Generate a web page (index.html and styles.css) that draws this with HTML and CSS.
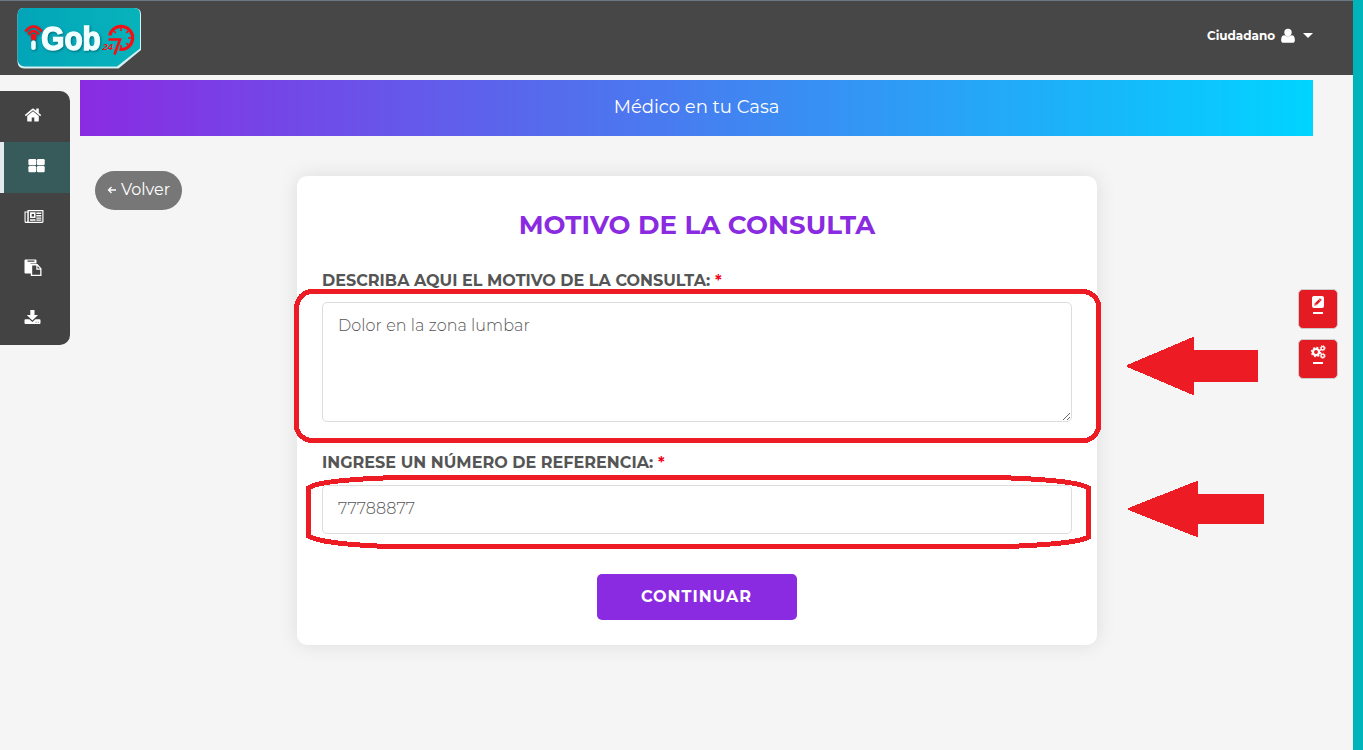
FILE: index.html
```html
<!DOCTYPE html>
<html lang="es">
<head>
<meta charset="utf-8">
<title>iGob 24/7 - Médico en tu Casa</title>
<link rel="stylesheet" href="styles.css">
</head>
<body>
<div class="page">
  <header class="topbar">
    <svg class="logo" width="126" height="64" viewBox="0 0 126 64">
      <defs>
        <linearGradient id="teal" x1="0" x2="1" y1="0" y2="0"><stop offset="0" stop-color="#02a5b8"/><stop offset="1" stop-color="#07b3bb"/></linearGradient>
      </defs>
      <path d="M7 2H118Q125 2 125 8V44L102.500 62.500H8Q2 62 1.500 56V9Q2 2 7 2Z" fill="#d8f1f2"/>
      <path d="M7 2H118Q124 2 124 8V42.500L101 60.500H8Q2 60 1.500 53V9Q2 2 7 2Z" fill="url(#teal)"/>
      <g class="mark">
        <text class="gob" x="25.300" y="43.700" textLength="59.500" lengthAdjust="spacingAndGlyphs">Gob</text>
        <path d="M15.200 36Q17.500 32.500 19.800 36V42Q19.800 44 17.500 44T15.200 42Z" fill="#f0ffff"/>
        <circle cx="17.500" cy="30.500" r="2.800" fill="#f40f14"/>
        <path d="M15.500 31H19.500L20 35Q17.500 32 15 35Z" fill="#f40f14"/>
        <path d="M9.300 25.500Q17.500 15.500 25.700 25.500M12.300 28.500Q17.500 21.500 22.700 28.500" fill="none" stroke="#f40f14" stroke-width="2.600"/>
      </g>
      <g>
        <path d="M93.700 29.500A11.600 11.600 0 1 1 103.500 43.400" fill="none" stroke="#f40f14" stroke-width="3.200"/>
        <path d="M105 22V25M112 25L110.300 27M115 32H112M112 39L110.300 37M98 25L99.800 27M105 42V39" stroke="#f40f14" stroke-width="1.600"/>
        <text class="num" x="86.500" y="43.500">24</text>
        <path d="M92.500 33.500H104L98.500 48.500" fill="none" stroke="#f40f14" stroke-width="2.600"/>
      </g>
    </svg>
    <div class="account">
      <span class="account-name">Ciudadano</span>
      <svg class="user" width="16" height="16" viewBox="0 0 1792 1792"><path d="M1664 1380q0 120-73 202t-181 82H382q-108 0-181-82t-73-202q0-85 8-160t38-152 68-131 94-89 134-34q180 128 426 128t426-128q76 0 134 34t94 89 68 131 38 152 8 160zM1310 500a414 414 0 1 1-828 0 414 414 0 1 1 828 0z"/></svg>
      <span class="caret"></span>
    </div>
  </header>

  <div class="body">
    <nav class="sidebar">
      <a class="item home"><svg width="18" height="18" viewBox="0 0 1792 1792"><path d="M1472 992v480q0 26-19 45t-45 19h-384v-384h-256v384h-384q-26 0-45-19t-19-45v-480q0-1 .5-3t.5-3l575-474 575 474q1 2 1 6zm223-69l-62 74q-8 9-21 11h-3q-13 0-21-7l-692-577-692 577q-12 8-24 7-13-2-21-11l-62-74q-8-10-7-23.500t11-21.500l719-599q32-26 76-26t76 26l244 204v-195q0-14 9-23t23-9h192q14 0 23 9t9 23v408l219 182q10 8 11 21.500t-7 23.500z"/></svg></a>
      <a class="item active"><svg width="18" height="18" viewBox="0 0 18 18"><rect x=".4" y="3" width="7.800" height="6.200" rx="1.300"/><rect x="8.900" y="3" width="7.800" height="6.200" rx="1.300"/><rect x=".4" y="10" width="7.800" height="6.200" rx="1.300"/><rect x="8.900" y="10" width="7.800" height="6.200" rx="1.300"/></svg></a>
      <a class="item"><svg width="20" height="18" viewBox="0 0 20 18"><path fill-rule="evenodd" d="M3.500 3H19.500V14.500Q19.500 16 18 16H2Q.5 16 .5 14.500V4.500H3.500ZM4.800 4.200V14Q4.800 14.600 4.500 14.800H18.300V4.200ZM1.600 5.500V14.200Q2.500 15.500 3.300 14.200V5.500ZM6 5.300H11.500V11H6ZM7.700 7V9.500H10V7ZM12.300 5.500H17.300V7H12.300ZM12.300 8H17.300V9.500H12.300ZM12.300 10.400H17.300V11.700H12.300ZM6 12.300H11.500V13.700H6ZM12.300 12.500H17.300V13.700H12.300Z"/></svg></a>
      <a class="item paste"><svg width="18" height="18" viewBox="0 0 18 18"><path fill-rule="evenodd" d="M1.500 .5H11.500Q12.500 .5 12.500 1.500V4.500H7Q6 4.500 6 5.500V14.500H1.500Q.5 14.500 .5 13.500V1.500Q.5 .5 1.500 .5ZM3.500 1.500V2.800H10.500V1.500Z"/><path fill-rule="evenodd" d="M6 5H13.500L17.500 9.500V17H6.800V14.500H6ZM8.200 6.400V15.700H16.200V10.700H12.300V6.400ZM13.500 7V9.500H16Z"/></svg></a>
      <a class="item last"><svg width="18" height="18" viewBox="0 0 18 18"><path fill-rule="evenodd" d="M6.300 2H10.500V7H14L8.400 12.500L2.800 7H6.300ZM1.500 11.200H5.300L8.400 14L11.500 11.200H15.500Q16.500 11.200 16.500 12.200V15Q16.500 16 15.500 16H1.500Q.5 16 .5 15V12.200Q.5 11.200 1.500 11.200ZM11.600 13.800V14.600H12.500V13.800ZM13.800 13.800V14.600H14.700V13.800Z"/></svg></a>
    </nav>

    <main class="content">
      <h1 class="banner">Médico en tu Casa</h1>
      <div class="workspace">
        <button class="back"><svg width="10" height="10" viewBox="0 0 10 10"><path d="M9 5H1.500M4.500 2L1.500 5L4.500 8" fill="none" stroke="#fff" stroke-width="1.300"/></svg><span class="back-text">Volver</span></button>
        <section class="card">
          <h2 class="title"><span>MOTIVO DE LA CONSULTA</span></h2>
          <label class="label first" for="motivo"><span class="label-a">DESCRIBA AQUI EL MOTIVO DE LA CONSULTA:</span> <b class="req">*</b></label>
          <textarea class="field area" id="motivo">Dolor en la zona lumbar</textarea>
          <label class="label second" for="numero"><span class="label-b">INGRESE UN NÚMERO DE REFERENCIA:</span> <b class="req">*</b></label>
          <input class="field number" id="numero" value="77788877">
          <button class="submit">CONTINUAR</button>
        </section>
      </div>
    </main>
  </div>
</div>
<div class="edge"></div>

<aside class="tools">
  <button class="tool"><svg width="14" height="14" viewBox="0 0 14 14"><rect x="1" y="1" width="12" height="12" rx="2" fill="#fff"/><path d="M3.200 10.800L3.900 8.200L8.900 3.200L10.800 5.100L5.800 10.100Z" fill="#e41b23"/><path d="M7.800 4.300L9.700 6.200M4 8.500L5.500 10" stroke="#fff" stroke-width=".6"/></svg><i class="dash"></i></button>
  <button class="tool"><svg width="16" height="14" viewBox="0 0 16 14"><g fill="none" stroke="#fff"><circle cx="6" cy="7" r="3.100" stroke-width="2.300"/><circle cx="6" cy="7" r="4.600" stroke-width="1.300" stroke-dasharray="1.800 1.812"/><circle cx="12.700" cy="3.200" r="1.700" stroke-width="1.400"/><circle cx="12.700" cy="3.200" r="2.600" stroke-width=".8" stroke-dasharray="1 1.040"/><circle cx="12.700" cy="10.800" r="1.700" stroke-width="1.400"/><circle cx="12.700" cy="10.800" r="2.600" stroke-width=".8" stroke-dasharray="1 1.040"/></g></svg><i class="dash"></i></button>
</aside>

<svg class="marks" width="1363" height="750" viewBox="0 0 1363 750" shape-rendering="crispEdges">
  <g fill="none" stroke="#ed1c24" stroke-width="5">
    <path d="M310 291.500H1085Q1096 294 1098.500 304V428Q1096 438 1086 440.500H310Q299 438 296.500 428V306Q299 294 310 291.500Z"/>
    <path d="M397 477.500H997Q1077 480 1088.500 488V537Q1077 544 1007 546.500H388Q321 544 308.500 536V488Q318 480 397 477.500Z"/>
  </g>
  <g fill="#ed1c24" stroke="#ed1c24" stroke-width="2" stroke-linejoin="round">
    <path d="M1127.500 366L1193 338V351H1257V381H1193V394Z"/>
    <path d="M1128.500 509L1197 482V495H1263V523H1197V536Z"/>
  </g>
</svg>
</body>
</html>
```
FILE: styles.css
```css
* { box-sizing: border-box; }
body {
  margin: 0;
  width: 1363px;
  height: 750px;
  overflow: hidden;
  display: flex;
  position: relative;
  background: #f5f5f5;
  font-family: Montserrat, Inter, "Liberation Sans", sans-serif;
}
button, textarea, input { font-family: inherit; }
.page { width: 1353px; height: 750px; }
.edge { width: 10px; background: #00b4bc; }
.topbar {
  height: 75px;
  padding: 5px 40px 0 16px;
  border-top: 1px solid #6b7780;
  background: #474747;
  display: flex;
  justify-content: space-between;
  align-items: flex-start;
}
.mark { filter: drop-shadow(1px 1.5px .8px rgba(0, 70, 80, .6)); }
.gob { font: bold 33px "Liberation Sans", sans-serif; fill: #f0ffff; stroke: #f0ffff; stroke-width: 1.5; }
.num { font: italic bold 9.5px "Liberation Sans", sans-serif; fill: #f40f14; }
.account { display: flex; align-items: center; height: 20px; margin-top: 19px; color: #fff; }
.account-name { font-size: 12px; font-weight: 700; width: 68px; white-space: nowrap; }
.user { fill: #fff; margin: 1px 0 0 5px; }
.caret { margin-left: 7px; border: 5px solid transparent; border-top-color: #fff; border-bottom: 0; }
.body { display: flex; align-items: flex-start; }
.sidebar {
  width: 70px;
  height: 254px;
  margin-top: 16px;
  border-radius: 0 10px 10px 0;
  overflow: hidden;
  background: #434343;
}
.item { height: 51px; padding: 14px 0 0 24px; display: block; }
.item svg { fill: #fff; display: block; }
.item.home { padding-top: 14.5px; }
.item.active { background: #375b5b; border-left: 4px solid #e4e9ed; }
.item.paste { padding-top: 15px; }
.item.last { padding-top: 13px; }
.content { width: 1233px; margin: 5px 0 0 10px; }
.banner {
  margin: 0;
  height: 56px;
  padding-bottom: 3px;
  display: flex;
  justify-content: center;
  align-items: center;
  background: linear-gradient(90deg, #8a2be2, #00d4ff);
  color: #fff;
  font-size: 18px;
  font-weight: 400;
}
.workspace { display: flex; align-items: flex-start; padding: 35px 0 0 15px; }
.back {
  width: 87px;
  height: 39px;
  padding: 0 0 3px 12px;
  border: 0;
  border-radius: 20px;
  background: #777;
  color: #fff;
  display: flex;
  align-items: center;
  gap: 4px;
  font-size: 16px;
}
.back svg { margin-top: 2px; }
.card {
  width: 800px;
  height: 469px;
  margin: 5px 0 0 115px;
  padding: 32px 25px 25px;
  border-radius: 10px;
  background: #fff;
  box-shadow: 0 0 20px rgba(0, 0, 0, .1);
  display: flex;
  flex-direction: column;
}
.title { margin: 0; height: 34px; line-height: 34px; text-align: center; color: #8a2be2; font-size: 26px; font-weight: 700; letter-spacing: .08px; }
.label { height: 24px; line-height: 24px; color: #555; font-size: 16px; font-weight: 700; letter-spacing: .02px; white-space: nowrap; }
.req { color: #f00018; font-weight: 600; }
.first { margin-top: 27px; }
.field {
  width: 750px;
  border: 1px solid #ddd;
  border-radius: 5px;
  outline: 0;
  background: #fff;
  color: #555;
  font-size: 16px;
  font-weight: 300;
  letter-spacing: .08px;
  padding: 11px 15px;
}
.area { height: 120px; margin: 9px 0 0; line-height: 24px; resize: vertical; }
.second { margin-top: 29px; }
.number { height: 49px; margin: 10px 0 0; padding: 0 15px 3px; }
.submit {
  width: 200px;
  height: 46px;
  margin: 40px auto 0;
  padding: 0 1px 2px 0;
  border: 0;
  border-radius: 5px;
  background: #8a2be2;
  color: #fff;
  font-size: 16px;
  font-weight: 700;
  letter-spacing: 1px;
}
.tools { position: absolute; left: 1298px; top: 289px; display: flex; flex-direction: column; gap: 10px; }
.tool {
  width: 40px;
  height: 40px;
  padding: 5px 0 0;
  border: 1px solid #ccc;
  border-radius: 5px;
  background: #e41b23;
  display: flex;
  flex-direction: column;
  align-items: center;
}
.dash { width: 10px; height: 2px; margin-top: 3px; background: #fff; }
.marks { position: absolute; left: 0; top: 0; pointer-events: none; }
```
